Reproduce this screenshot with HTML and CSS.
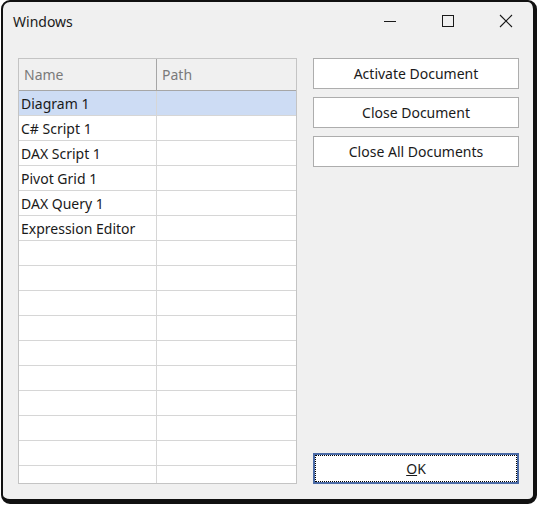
FILE: index.html
```html
<!DOCTYPE html>
<html lang="en">
<head>
    <meta charset="UTF-8">
    <meta name="viewport" content="width=device-width, initial-scale=1.0">
    <title>Windows</title>
    <link rel="stylesheet" href="styles.css">
</head>
<body>

    <!-- Dialog window -->
    <div class="window">
        <div class="titlebar">
            <span class="title">Windows</span>
            <div class="caption">
                <span class="cap-btn">
                    <svg width="14" height="14" viewBox="0 0 14 14"><path d="M1 7.5h12" stroke="#1a1a1a" stroke-width="1"/></svg>
                </span>
                <span class="cap-btn">
                    <svg width="14" height="14" viewBox="0 0 14 14"><rect x="1.5" y="1.5" width="11" height="11" fill="none" stroke="#1a1a1a" stroke-width="1"/></svg>
                </span>
                <span class="cap-btn">
                    <svg width="14" height="14" viewBox="0 0 14 14"><path d="M1 1L13 13M13 1L1 13" stroke="#1a1a1a" stroke-width="1.1"/></svg>
                </span>
            </div>
        </div>

        <div class="content">
            <!-- Document list -->
            <div class="grid">
                <div class="grid-head">
                    <div class="hcell">Name</div>
                    <div class="hcell">Path</div>
                </div>
                <div id="grid-body"></div>
            </div>

            <!-- Actions -->
            <div class="actions">
                <button class="btn">Activate Document</button>
                <button class="btn">Close Document</button>
                <button class="btn">Close All Documents</button>
                <button class="btn btn-default"><u>O</u>K</button>
            </div>
        </div>
    </div>

    <script>
        const docs = ['Diagram 1', 'C# Script 1', 'DAX Script 1', 'Pivot Grid 1', 'DAX Query 1', 'Expression Editor'];
        const body = document.getElementById('grid-body');

        // fill the grid with the open documents, then pad with blank rows
        for (let i = 0; i < 17; i++) {
            const row = document.createElement('div');
            row.className = 'row' + (i === 0 ? ' selected' : '');
            const name = document.createElement('div');
            name.className = 'cell';
            name.textContent = docs[i] || '';
            const path = document.createElement('div');
            path.className = 'cell';
            row.appendChild(name);
            row.appendChild(path);
            body.appendChild(row);
        }
    </script>
</body>
</html>
```

FILE: styles.css
```css
/* General Styles */
body {
    margin: 0;
    background-color: #ffffff;
    font-family: "Noto Sans", "Open Sans", sans-serif;
    font-size: 14px;
    color: #1a1a1a;
}

/* Window frame */
.window {
    box-sizing: border-box;
    width: 536px;
    height: 504px;
    margin-left: 1px;
    border-style: solid;
    border-color: #111111;
    border-width: 2px 4px 5px 2px;
    border-radius: 9px;
    background-color: #f0f0f0;
    display: flex;
    flex-direction: column;
    overflow: hidden;
}

.titlebar {
    height: 38px;
    display: flex;
    align-items: center;
    flex-shrink: 0;
}

.title {
    padding-left: 10px;
    flex: 1;
}

.caption {
    display: flex;
    gap: 8px;
    padding-right: 2px;
}

.cap-btn {
    width: 50px;
    height: 30px;
    display: flex;
    align-items: center;
    justify-content: center;
}

/* Content area */
.content {
    flex: 1;
    display: flex;
    gap: 16px;
    padding: 18px 13px 15px 15px;
    min-height: 0;
}

/* Grid Styles */
.grid {
    box-sizing: border-box;
    width: 279px;
    border: 1px solid #c4c4c4;
    background-color: #ffffff;
    overflow: hidden;
}

.grid-head {
    display: grid;
    grid-template-columns: 138px 1fr;
    height: 32px;
    box-sizing: border-box;
    border-bottom: 1px solid #a6a6a6;
    background-color: #f0f0f0;
}

.hcell {
    padding-left: 5px;
    display: flex;
    align-items: center;
    color: #7a7a7a;
}

.hcell:first-child {
    border-right: 1px solid #a6a6a6;
}

.row {
    display: grid;
    grid-template-columns: 138px 1fr;
    height: 25px;
    box-sizing: border-box;
    border-bottom: 1px solid #d6d6d6;
}

.row.selected {
    background-color: #cddcf4;
}

.cell {
    padding-left: 2px;
    display: flex;
    align-items: center;
    white-space: nowrap;
}

.cell:first-child {
    border-right: 1px solid #d6d6d6;
}

/* Buttons */
.actions {
    width: 206px;
    display: flex;
    flex-direction: column;
    gap: 8px;
}

.btn {
    box-sizing: border-box;
    height: 31px;
    border: 1px solid #adadad;
    background-color: #ffffff;
    font-family: inherit;
    font-size: 14px;
    color: #1a1a1a;
    padding: 0;
}

.btn-default {
    margin-top: auto;
    border: 2px solid #4b6ba6;
    outline: 1px dotted #000000;
    outline-offset: -3px;
}
```
